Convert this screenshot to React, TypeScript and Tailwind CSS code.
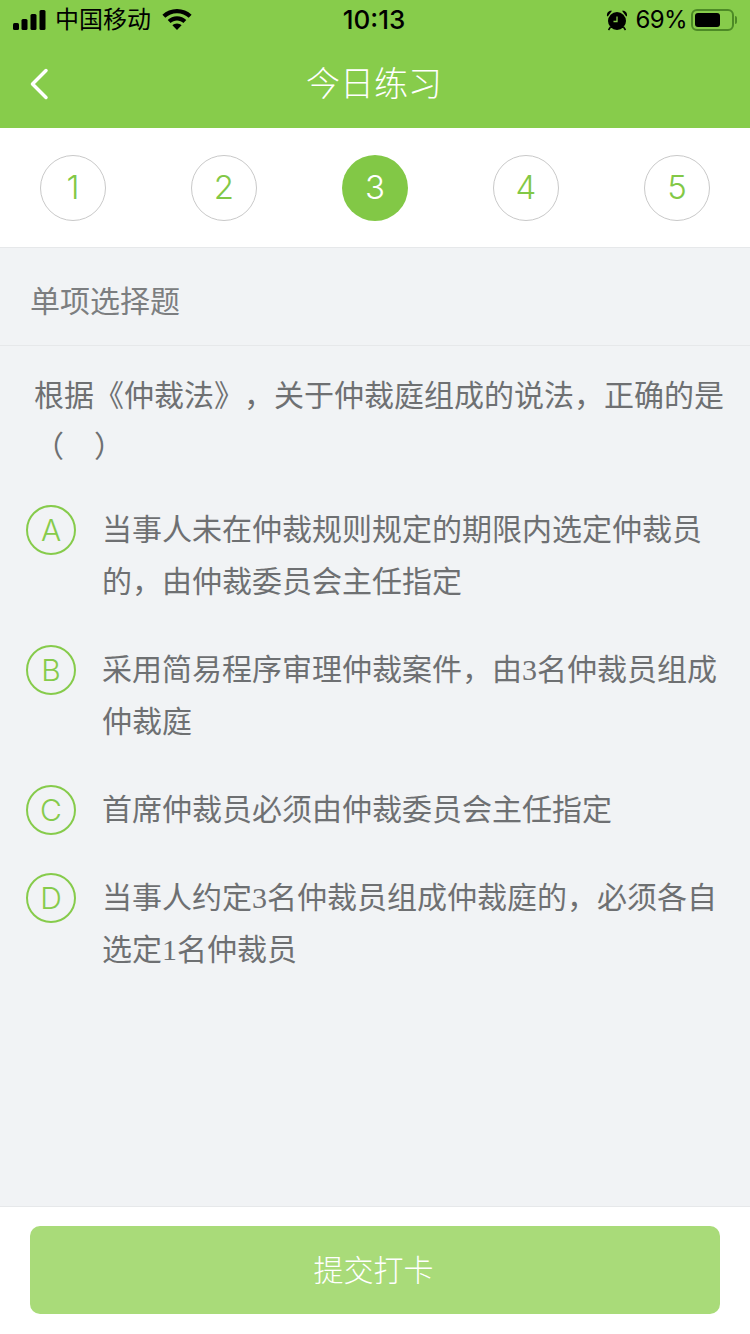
const cjk = "font-['Liberation_Sans','Noto_Sans_CJK_SC',sans-serif]"

const steps = [1, 2, 3, 4, 5]

const options = [
  { key: "A", text: "当事人未在仲裁规则规定的期限内选定仲裁员的，由仲裁委员会主任指定" },
  { key: "B", text: "采用简易程序审理仲裁案件，由3名仲裁员组成仲裁庭" },
  { key: "C", text: "首席仲裁员必须由仲裁委员会主任指定" },
  { key: "D", text: "当事人约定3名仲裁员组成仲裁庭的，必须各自选定1名仲裁员" },
]

function StatusBar() {
  return (
    <div className="grid h-[40px] grid-cols-3 items-center pl-[13px] pr-[12px] text-black">
      <div className="flex items-center">
        <svg width="33" height="22" viewBox="0 0 33 22" className="fill-black">
          <rect x="0" y="14" width="6" height="7" rx="1.500" />
          <rect x="8.500" y="10" width="6" height="11" rx="1.500" />
          <rect x="17.500" y="5" width="6" height="16" rx="1.500" />
          <rect x="26.500" y="1" width="6" height="20" rx="1.500" />
        </svg>
        <span className="ml-[9px] text-[24px] leading-none">中国移动</span>
        <svg width="30" height="22" viewBox="0 0 30 22" className="ml-[11px] fill-black">
          <path d="M15 0C9.300 0 4.200 2.200.4 5.800l2.900 3C6.300 5.900 10.400 4.200 15 4.200s8.700 1.700 11.700 4.600l2.900-3C25.800 2.200 20.700 0 15 0z" />
          <path d="M15 7.300c-3.600 0-6.900 1.400-9.300 3.700l2.900 3c1.700-1.600 3.900-2.600 6.400-2.600s4.700 1 6.400 2.600l2.900-3c-2.400-2.300-5.700-3.700-9.300-3.700z" />
          <path d="M15 14.400c-1.800 0-3.400.7-4.600 1.800L15 21l4.600-4.800c-1.200-1.100-2.800-1.800-4.600-1.800z" />
        </svg>
      </div>
      <div className="pr-[3px] text-center text-[26px] font-medium leading-none font-['Inter',sans-serif]">10:13</div>
      <div className="flex items-center justify-end">
        <svg width="22" height="22" viewBox="0 0 22 22" className="fill-black">
          <circle cx="11" cy="12" r="9" />
          <path d="M1 7C.5 3.500 3 1 6 1.800L1.800 7.500zM21 7C21.500 3.500 19 1 16 1.800l4.200 5.700z" />
          <path d="M4.500 18l-2 3M17.500 18l2 3" stroke="black" strokeWidth="1.500" />
          <path d="M11 7.500v5H7.500" fill="none" stroke="#87cc4b" strokeWidth="1.300" />
        </svg>
        <span className="ml-[7px] text-[24px] font-normal leading-none tracking-[-0.6px] font-['Inter',sans-serif]">69%</span>
        <div className="ml-[4px] mr-[1px] flex items-center">
          <div className="flex h-[22px] w-[43px] items-center rounded-[6px] border-2 border-[#4d8a26] p-[2px]">
            <div className="h-full w-[25px] rounded-[3px] bg-black" />
          </div>
          <div className="ml-[1px] h-[8px] w-[2px] rounded-r-full bg-[#4d8a26]" />
        </div>
      </div>
    </div>
  )
}

function NavBar() {
  return (
    <div className="relative flex h-[88px] items-center justify-center pb-[1px] pr-[2px]">
      <svg width="20" height="32" viewBox="0 0 20 32" className="absolute left-[29px] top-[28px]" fill="none">
        <path d="M17 2.500 3.500 16 17 29.500" stroke="white" strokeWidth="3.500" strokeLinecap="round" strokeLinejoin="round" />
      </svg>
      <span className="text-[34px] font-light leading-none text-white">今日练习</span>
    </div>
  )
}

function Stepper() {
  return (
    <div className="flex h-[120px] items-start justify-between border-b border-[#e6e8ea] bg-white px-[40px] pt-[27px] font-['Inter',sans-serif] font-[350]">
      {steps.map((n) => (
        <div
          key={n}
          className={
            n === 3
              ? "flex h-[66px] w-[66px] items-center justify-center rounded-full bg-[#82c846] text-[33px] text-white"
              : "flex h-[66px] w-[66px] items-center justify-center rounded-full border border-[#c9c9c9] text-[33px] text-[#82c846]"
          }
        >
          {n}
        </div>
      ))}
    </div>
  )
}

function Option({ opt }: { opt: (typeof options)[number] }) {
  return (
    <div className="flex items-start">
      <div className="mt-[1px] flex h-[50px] w-[50px] shrink-0 items-center justify-center rounded-full border-2 border-[#86cb4b] text-[30px] font-[350] leading-none text-[#86cb4b] font-['Inter',sans-serif]">
        {opt.key}
      </div>
      <div className="ml-[26px] w-[620px] text-[30px] leading-[52px] text-[#6e7072] font-['Liberation_Serif','Noto_Sans_CJK_SC',serif] [text-spacing-trim:space-all]">
        {opt.text}
      </div>
    </div>
  )
}

export default function App() {
  return (
    <div className={`flex h-[1334px] w-[750px] flex-col overflow-hidden bg-[#f1f3f5] ${cjk}`}>
      <div className="bg-[#87cc4b]">
        <StatusBar />
        <NavBar />
      </div>
      <Stepper />
      <div className="flex h-[98px] items-center border-b border-[#e6e8ea] pl-[30px] pt-[11px] text-[30px] leading-none text-[#7c7e80]">
        单项选择题
      </div>
      <div className="flex-1">
        <div className="pl-[34px] pr-[16px] pt-[24px] text-[30px] leading-[51px] text-[#6e7072] [text-spacing-trim:space-all]">
          根据《仲裁法》，关于仲裁庭组成的说法，正确的是（　）
        </div>
        <div className="mt-[32px] flex flex-col gap-[36px] pl-[26px]">
          {options.map((o) => (
            <Option key={o.key} opt={o} />
          ))}
        </div>
      </div>
      <div className="h-[128px] border-t border-[#e6e8ea] bg-white px-[30px] pt-[19px]">
        <div className="flex h-[88px] items-center justify-center rounded-[10px] bg-[#a9db79] pr-[3px] text-[30px] font-light text-white">
          提交打卡
        </div>
      </div>
    </div>
  )
}
